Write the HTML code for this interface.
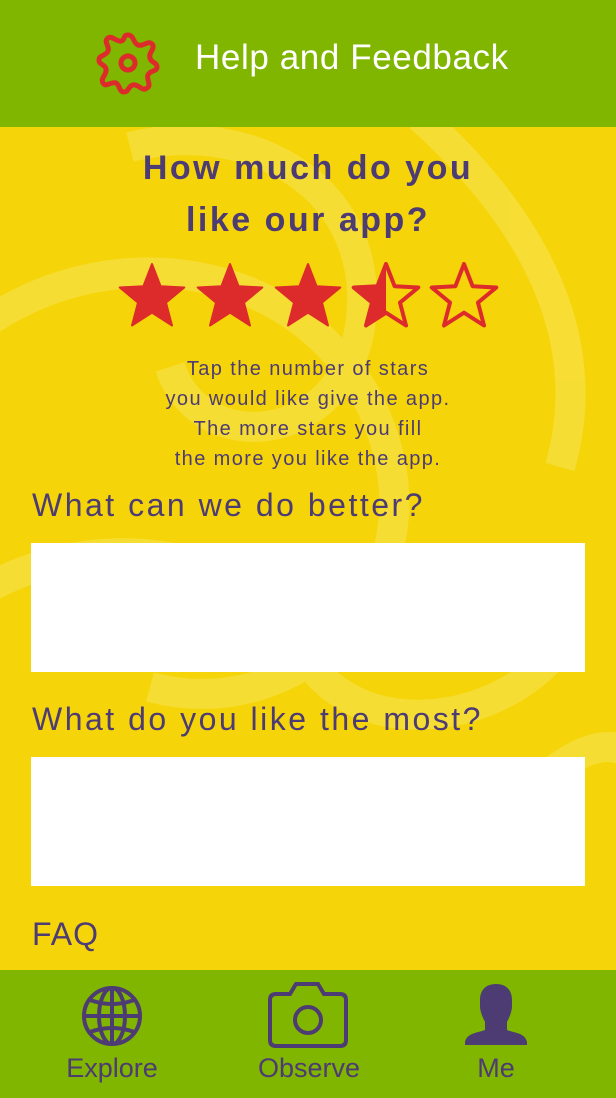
<!DOCTYPE html>
<html><head><meta charset="utf-8"><style>
*{margin:0;padding:0;box-sizing:border-box}
body{width:616px;height:1098px;overflow:hidden;background:#f5d50a;font-family:"Liberation Sans",sans-serif;color:#4d3b73;position:relative}
.hdr{position:absolute;left:0;top:0;width:616px;height:127px;background:#80b500}
.hdr .t{position:absolute;left:195px;top:38px;font-size:35px;color:#fff;letter-spacing:0.6px}
.bg{position:absolute;left:0;top:127px}
.a{position:absolute;left:0;width:616px;text-align:center}
h1{position:absolute;left:0;width:616px;text-align:center;font-size:34px;font-weight:bold;line-height:52px;top:142px;letter-spacing:2.5px}
.q{position:absolute;left:32px;font-size:32px;letter-spacing:2.5px}
.box{position:absolute;left:31px;width:554px;height:129px;background:#fff}
.ftr{position:absolute;left:0;top:970px;width:616px;height:128px;background:#80b500}
.lbl{position:absolute;top:83px;font-size:27px;width:160px;text-align:center}
</style></head><body>
<svg class="bg" width="616" height="843" viewBox="0 0 616 843">
<g fill="none" stroke="#f7df3e" stroke-width="30" opacity=".8">
<path d="M130 20 C 250 -10 380 60 360 200 C 340 320 200 330 170 240"/>
<path d="M-20 200 C 120 100 320 140 380 300 C 440 460 300 600 150 560"/>
<path d="M420 -10 C 520 80 600 200 560 340"/>
<path d="M-10 460 C 100 400 250 420 300 520 C 350 620 500 600 560 520"/>
<path d="M500 700 C 560 620 620 600 640 640"/>
</g>
</svg>
<div class="hdr">
<svg style="position:absolute;left:95px;top:30px" width="66" height="66" viewBox="-33 -33 66 66">
<path fill="none" stroke="#dd2b2b" stroke-width="5" d="M0 -28 C6 -28 5 -20 10 -18 C15 -16 20 -23 24 -19 C28 -15 20 -10 22 -5 C23 0 29 -1 29 4 C29 9 22 7 20 12 C18 17 24 22 19 25 C14 29 11 21 5 22 C0 23 1 29 -4 29 C-9 29 -8 22 -12 20 C-17 18 -22 25 -25 20 C-28 15 -21 12 -22 6 C-23 1 -29 2 -29 -3 C-29 -8 -22 -7 -20 -12 C-18 -17 -25 -21 -20 -25 C-16 -28 -12 -21 -7 -22 C-2 -23 -6 -28 0 -28Z"/>
<circle r="7" fill="none" stroke="#dd2b2b" stroke-width="5"/>
</svg>
<div class="t">Help and Feedback</div>
</div>
<h1>How much do you<br>like our app?</h1>
<svg style="position:absolute;left:0;top:262px" width="616" height="72" viewBox="0 0 616 72">
<defs>
<path id="s" d="M0,-34 L8.6,-11.8 L32.3,-10.5 L14,4.6 L20,27.5 L0,14.7 L-20,27.5 L-14,4.6 L-32.3,-10.5 L-8.6,-11.8Z" stroke-linejoin="round"/>
<clipPath id="h"><rect x="-40" y="-40" width="40" height="80"/></clipPath>
</defs>
<g fill="#dd2b2b" stroke="#dd2b2b" stroke-width="2">
<use href="#s" transform="translate(152,36)"/>
<use href="#s" transform="translate(230,36)"/>
<use href="#s" transform="translate(308,36)"/>
</g>
<g transform="translate(386,36)"><use href="#s" fill="#dd2b2b" clip-path="url(#h)"/><use href="#s" fill="none" stroke="#dd2b2b" stroke-width="4"/></g>
<use href="#s" transform="translate(464,36)" fill="none" stroke="#dd2b2b" stroke-width="4"/>
</svg>
<div class="a" style="top:354px;font-size:20px;line-height:30px;letter-spacing:1.4px">Tap the number of stars<br>you would like give the app.<br>The more stars you fill<br>the more you like the app.</div>
<div class="q" style="top:487px">What can we do better?</div>
<div class="box" style="top:543px"></div>
<div class="q" style="top:701px">What do you like the most?</div>
<div class="box" style="top:757px"></div>
<div class="q" style="top:916px;letter-spacing:1px">FAQ</div>
<div class="ftr">
<svg style="position:absolute;left:80px;top:14px" width="64" height="64" viewBox="0 0 64 64" fill="none" stroke="#4d3b73" stroke-width="4">
<circle cx="32" cy="32" r="28"/><ellipse cx="32" cy="32" rx="13" ry="28"/><line x1="32" y1="4" x2="32" y2="60"/><line x1="4" y1="32" x2="60" y2="32"/><path d="M10 16 Q32 24 54 16 M10 48 Q32 40 54 48"/>
</svg>
<div class="lbl" style="left:32px">Explore</div>
<svg style="position:absolute;left:268px;top:12px" width="80" height="66" viewBox="0 0 80 66" fill="none" stroke="#4d3b73" stroke-width="4">
<path d="M8 12 H22 L28 2 H50 L56 12 H72 Q78 12 78 18 V58 Q78 64 72 64 H8 Q2 64 2 58 V18 Q2 12 8 12Z"/><circle cx="40" cy="38" r="13"/>
</svg>
<div class="lbl" style="left:229px">Observe</div>
<svg style="position:absolute;left:463px;top:14px" width="66" height="62" viewBox="0 0 66 62" fill="#4d3b73">
<path d="M33 0 C22 0 17 7 17 16 V22 C17 28 20 34 22 38 V46 C14 49 4 49 2 58 V61 H64 V58 C62 49 52 49 44 46 V38 C46 34 49 28 49 22 V16 C49 7 44 0 33 0Z"/>
</svg>
<div class="lbl" style="left:416px">Me</div>
</div>
</body></html>
